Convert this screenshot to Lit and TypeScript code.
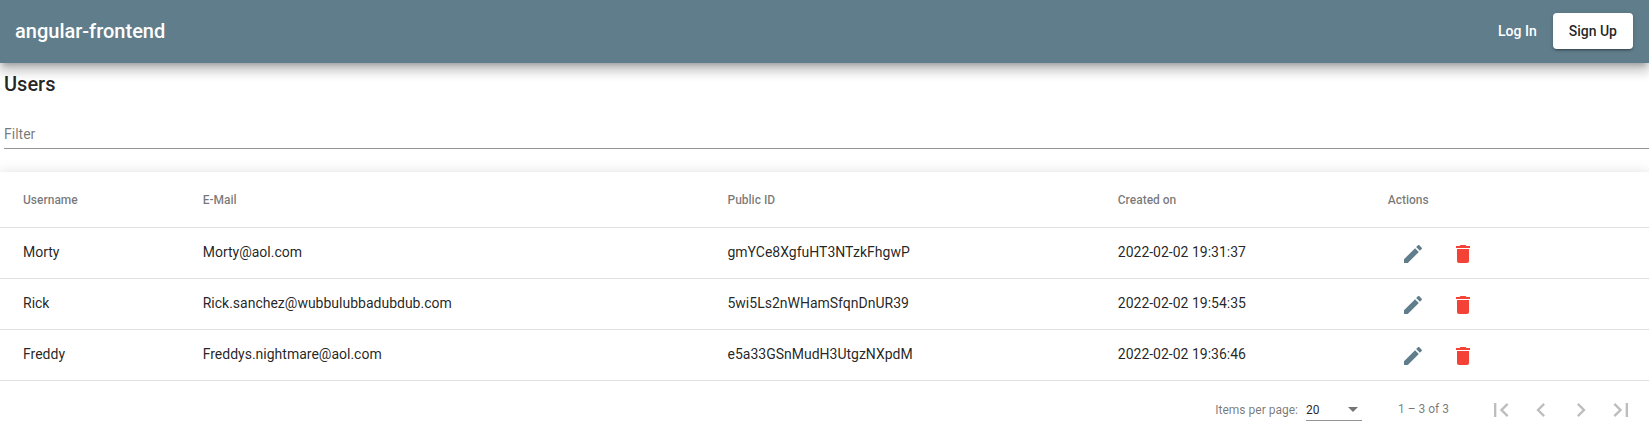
import { LitElement, html, css, svg } from "lit";
import { customElement, property } from "lit/decorators.js";

interface User {
  name: string;
  email: string;
  id: string;
  created: string;
}

const USERS: User[] = [
  { name: "Morty", email: "Morty@aol.com", id: "gmYCe8XgfuHT3NTzkFhgwP", created: "2022-02-02 19:31:37" },
  { name: "Rick", email: "Rick.sanchez@wubbulubbadubdub.com", id: "5wi5Ls2nWHamSfqnDnUR39", created: "2022-02-02 19:54:35" },
  { name: "Freddy", email: "Freddys.nightmare@aol.com", id: "e5a33GSnMudH3UtgzNXpdM", created: "2022-02-02 19:36:46" },
];

const ICONS: Record<string, string> = {
  edit: "M3 17.25V21h3.75L17.81 9.94l-3.75-3.75L3 17.25zM20.71 7.04c.39-.39.39-1.02 0-1.41l-2.34-2.34c-.39-.39-1.02-.39-1.41 0l-1.83 1.83 3.75 3.75 1.83-1.83z",
  delete: "M6 19c0 1.1.9 2 2 2h8c1.1 0 2-.9 2-2V7H6v12zM19 4h-3.5l-1-1h-5l-1 1H5v2h14V4z",
  first: "M18.41 16.59L13.82 12l4.59-4.59L17 6l-6 6 6 6zM6 6h2v12H6z",
  prev: "M15.41 7.41L14 6l-6 6 6 6 1.41-1.41L10.83 12z",
  next: "M10 6L8.59 7.41 13.17 12l-4.58 4.59L10 18l6-6z",
  last: "M5.59 7.41L10.18 12l-4.59 4.59L7 18l6-6-6-6zM16 6h2v12h-2z",
};

@customElement("icon-button")
class IconButton extends LitElement {
  @property() icon = "edit";
  @property({ type: Number }) size = 24;

  static styles = css`
    :host { display: block; width: 40px; height: 40px; }
    .button {
      display: flex; align-items: center; justify-content: center;
      width: 40px; height: 40px; padding: 0; border: 0;
      background: transparent; color: inherit;
    }
    .glyph { display: block; fill: currentColor; }
  `;

  render() {
    return html`<button class="button" aria-label=${this.icon}>
      <svg class="glyph" width=${this.size} height=${this.size} viewBox="0 0 24 24">
        ${svg`<path d=${ICONS[this.icon]}></path>`}
      </svg>
    </button>`;
  }
}

@customElement("app-root")
class AppRoot extends LitElement {
  static styles = css`
    :host {
      display: block; height: 445px; overflow: hidden; background: #fff;
      font-family: Roboto, "Liberation Sans", sans-serif;
      font-size: 14px; color: rgba(0, 0, 0, 0.87);
    }
    .toolbar {
      position: relative; z-index: 2; box-sizing: border-box;
      display: flex; align-items: center; height: 63px; padding: 0 16px 1px 15px;
      background: #607d8b; color: #fff;
      box-shadow: 0 5px 5px -3px rgba(0, 0, 0, 0.2), 0 8px 10px 1px rgba(0, 0, 0, 0.14), 0 3px 14px 2px rgba(0, 0, 0, 0.12);
    }
    .brand { flex: 1; font-size: 20px; font-weight: 500; line-height: 32px; }
    .btn {
      height: 36px; padding: 0 16px; border: 0; border-radius: 4px;
      font: 500 14px/36px Roboto, sans-serif; color: inherit; background: transparent;
    }
    .raised {
      background: #fff; color: rgba(0, 0, 0, 0.87);
      box-shadow: 0 3px 1px -2px rgba(0, 0, 0, 0.2), 0 2px 2px 0 rgba(0, 0, 0, 0.14), 0 1px 5px 0 rgba(0, 0, 0, 0.12);
    }
    .head { height: 109px; padding-left: 4px; box-sizing: border-box; padding-top: 5px; }
    .title { margin: 0; font-size: 20px; font-weight: 500; line-height: 32px; }
    .filter {
      height: 31px; margin-top: 17px;
      display: flex; align-items: center; border-bottom: 1px solid #949494;
      color: rgba(0, 0, 0, 0.54);
    }
    .filter span { padding-top: 2px; }
    .card {
      background: #fff;
      box-shadow: 0 5px 5px -3px rgba(0, 0, 0, 0.2), 0 8px 10px 1px rgba(0, 0, 0, 0.14), 0 3px 14px 2px rgba(0, 0, 0, 0.12);
    }
    .row {
      display: grid; grid-template-columns: 179.7px 524.8px 390.3px 269.9px 1fr;
      align-items: center; box-sizing: border-box; height: 51px; padding-left: 23px;
      border-bottom: 1px solid #e0e0e0;
    }
    .header { height: 56px; font-size: 12px; font-weight: 500; color: rgba(0, 0, 0, 0.54); }
    .cell { line-height: 20px; padding-bottom: 2px; }
    .header .cell { padding-bottom: 0; }
    .actions { display: flex; gap: 10px; padding: 1px 0 0 5px; }
    .edit { color: #607d8b; }
    .delete { color: #f44336; }
    .paginator {
      display: flex; align-items: center; justify-content: flex-end;
      height: 64px; box-sizing: border-box; padding: 0 8px 6px 0;
      font-size: 12px; color: rgba(0, 0, 0, 0.54);
    }
    .select {
      display: flex; align-items: center; justify-content: space-between;
      box-sizing: border-box; width: 56px; height: 22px; margin: 0 36px 0 8px;
      padding: 0 4px 0 0; border-bottom: 1px solid #949494; color: rgba(0, 0, 0, 0.87);
    }
    .arrow {
      border-left: 5px solid transparent; border-right: 5px solid transparent;
      border-top: 5px solid rgba(0, 0, 0, 0.54);
    }
    .range { margin-right: 32px; padding-bottom: 3px; }
    .pages { display: flex; color: rgba(0, 0, 0, 0.26); }
  `;

  render() {
    return html`
      <header class="toolbar">
        <div class="brand">angular-frontend</div>
        <button class="btn">Log In</button>
        <button class="btn raised">Sign Up</button>
      </header>
      <section class="head">
        <h2 class="title">Users</h2>
        <div class="filter"><span>Filter</span></div>
      </section>
      <section class="card">
        <div class="row header">
          ${["Username", "E-Mail", "Public ID", "Created on", "Actions"].map((t) => html`<div class="cell">${t}</div>`)}
        </div>
        ${USERS.map((u) => html`<div class="row">
          <div class="cell">${u.name}</div>
          <div class="cell">${u.email}</div>
          <div class="cell">${u.id}</div>
          <div class="cell">${u.created}</div>
          <div class="actions">
            <icon-button class="edit" icon="edit"></icon-button>
            <icon-button class="delete" icon="delete"></icon-button>
          </div>
        </div>`)}
        <div class="paginator">
          <span>Items per page:</span>
          <div class="select"><span>20</span><span class="arrow"></span></div>
          <span class="range">1 – 3 of 3</span>
          <div class="pages">
            ${["first", "prev", "next", "last"].map((i) => html`<icon-button icon=${i} size="28"></icon-button>`)}
          </div>
        </div>
      </section>
    `;
  }
}
